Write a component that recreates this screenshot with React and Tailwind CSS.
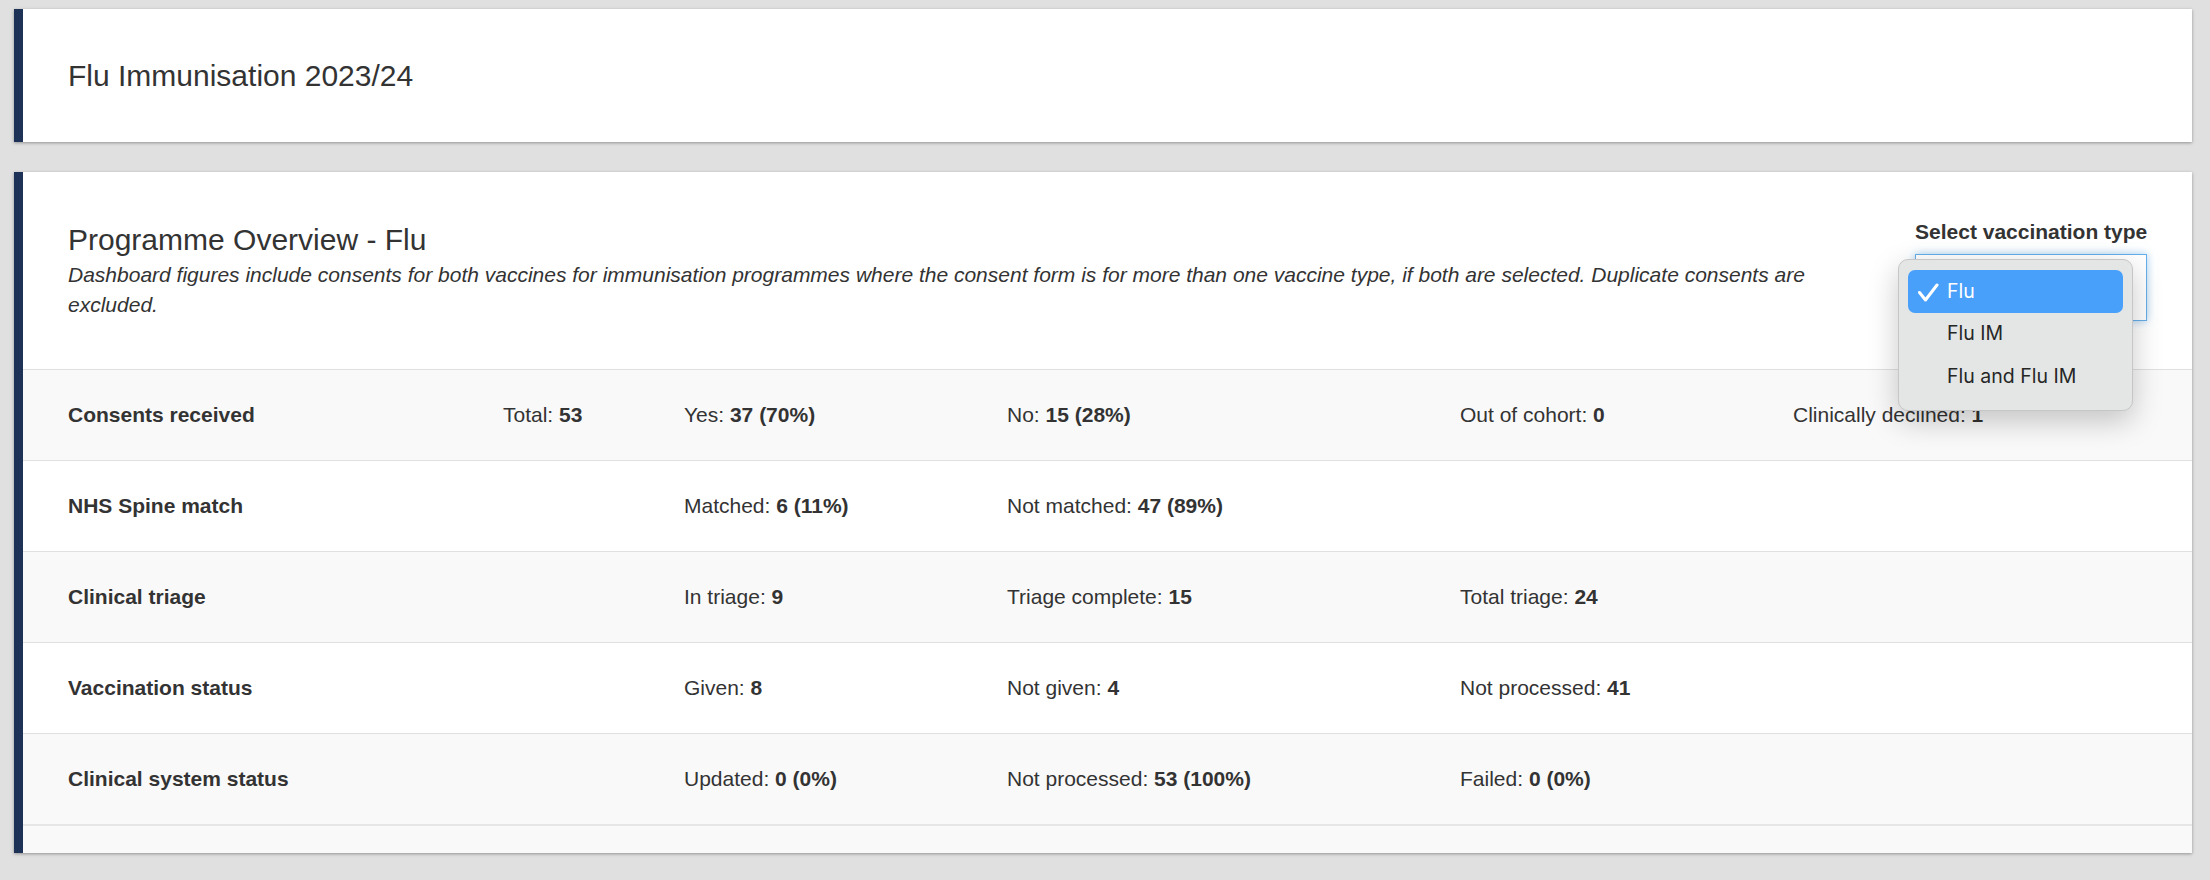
import React from "react";

const rows = [
  {
    label: "Consents received",
    cells: [
      ["Total: ", "53"],
      ["Yes: ", "37 (70%)"],
      ["No: ", "15 (28%)"],
      ["Out of cohort: ", "0"],
      ["Clinically declined: ", "1"],
    ],
  },
  {
    label: "NHS Spine match",
    cells: [null, ["Matched: ", "6 (11%)"], ["Not matched: ", "47 (89%)"], null, null],
  },
  {
    label: "Clinical triage",
    cells: [null, ["In triage: ", "9"], ["Triage complete: ", "15"], ["Total triage: ", "24"], null],
  },
  {
    label: "Vaccination status",
    cells: [null, ["Given: ", "8"], ["Not given: ", "4"], ["Not processed: ", "41"], null],
  },
  {
    label: "Clinical system status",
    cells: [null, ["Updated: ", "0 (0%)"], ["Not processed: ", "53 (100%)"], ["Failed: ", "0 (0%)"], null],
  },
];

function Row({ row, index }) {
  const odd = index % 2 === 0;
  const last = index === rows.length - 1;
  return (
    <div
      className={
        "grid grid-cols-[435px_181px_323px_453px_333px_1fr] items-center pl-[45px] " +
        (odd ? "bg-[#f9f9f9] " : "bg-white ") +
        (last ? "h-[92px] border-b-2 border-[#e6e6e6]" : "h-[91px] border-b border-[#e0e0e0]")
      }
    >
      <div className="font-bold text-[21px] leading-[24px] text-[#333]">{row.label}</div>
      {row.cells.map((c, i) => (
        <div key={i} className="text-[21px] leading-[24px] text-[#333] whitespace-nowrap">
          {c ? (
            <>
              {c[0]}
              <span className="font-bold">{c[1]}</span>
            </>
          ) : null}
        </div>
      ))}
    </div>
  );
}

function Dropdown() {
  const items = ["Flu", "Flu IM", "Flu and Flu IM"];
  return (
    <div
      className="absolute top-[5px] left-[-17px] w-[235px] h-[152px] rounded-[10px] bg-[#e4e6e6] border border-[#c6c6c6] shadow-[0_10px_30px_rgba(0,0,0,0.22)] pt-[10px] px-[9px] z-10"
      style={{ fontFamily: "Inter, 'Noto Sans', sans-serif" }}
    >
      {items.map((it, i) => (
        <div
          key={it}
          className={
            "relative flex items-center h-[42.5px] pl-[39px] text-[19.5px] rounded-[7px] " +
            (i === 0 ? "bg-[#48a0fa] text-white" : "text-[#262626]")
          }
        >
          {i === 0 && (
            <svg
              className="absolute left-[10px] top-[13px]"
              width="21"
              height="19"
              viewBox="0 0 21 19"
              fill="none"
            >
              <path d="M1.5 9.5 L7.5 17 L19 2" stroke="white" strokeWidth="3" strokeLinecap="round" strokeLinejoin="round" />
            </svg>
          )}
          {it}
        </div>
      ))}
    </div>
  );
}

export default function App() {
  return (
    <div
      className="min-h-[880px] bg-[#e0e0e0] pt-[9px] pl-[14px] pr-[18px] pb-[20px] text-[#333]"
      style={{ fontFamily: "'Liberation Sans', Arial, Helvetica, sans-serif" }}
    >
      <div className="h-[133px] bg-white border-l-[9px] border-[#1e3157] shadow-[0_1px_3px_rgba(0,0,0,0.35)] flex items-center pl-[45px]">
        <h1 className="text-[30px] leading-[33px] text-[#333]">Flu Immunisation 2023/24</h1>
      </div>

      <div className="mt-[30px] bg-white border-l-[9px] border-[#1e3157] shadow-[0_1px_3px_rgba(0,0,0,0.35)]">
        <div className="flex justify-between pt-[48px] pb-[48px] pl-[45px] pr-[45px] border-b border-[#e0e0e0]">
          <div className="pt-[3px] w-[1780px]">
            <h2 className="text-[30px] leading-[33px] text-[#333]">Programme Overview - Flu</h2>
            <p className="mt-[4px] italic text-[21px] leading-[30px] text-[#333]">
              Dashboard figures include consents for both vaccines for immunisation programmes where the consent form is for more than one vaccine type, if both are selected. Duplicate consents are excluded.
            </p>
          </div>
          <div className="w-[232px] shrink-0">
            <div className="font-bold text-[21px] leading-[24px] text-[#333] whitespace-nowrap">Select vaccination type</div>
            <div className="relative mt-[10px]">
              <div className="h-[67px] w-[232px] bg-white border border-[#66afe9] shadow-[0_0_8px_rgba(102,175,233,0.6)]"></div>
              <Dropdown />
            </div>
          </div>
        </div>
        {rows.map((r, i) => (
          <Row key={r.label} row={r} index={i} />
        ))}
        <div className="h-[27px] bg-[#f9f9f9]"></div>
      </div>
    </div>
  );
}
